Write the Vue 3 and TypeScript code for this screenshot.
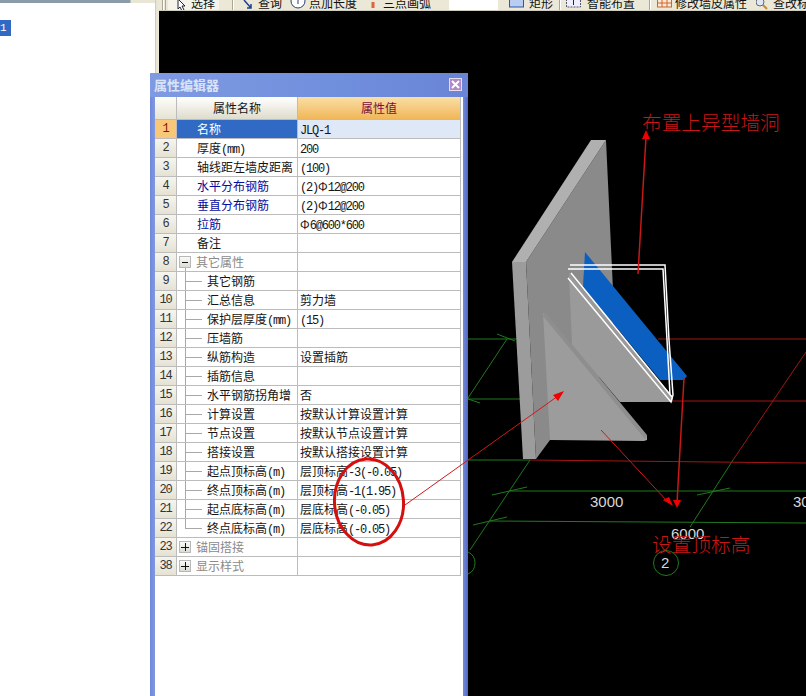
<script setup lang="ts">
type Kind = 'plain' | 'blue' | 'group' | 'branch' | 'last';
interface Row {
  no: number;
  name: string;
  value: string;
  kind: Kind;
  box?: 'open' | 'closed';
}

const rows: Row[] = [
  { no: 1, name: '名称', value: 'JLQ-1', kind: 'plain' },
  { no: 2, name: '厚度(mm)', value: '200', kind: 'plain' },
  { no: 3, name: '轴线距左墙皮距离', value: '(100)', kind: 'plain' },
  { no: 4, name: '水平分布钢筋', value: '(2)Φ12@200', kind: 'blue' },
  { no: 5, name: '垂直分布钢筋', value: '(2)Φ12@200', kind: 'blue' },
  { no: 6, name: '拉筋', value: 'Φ6@600*600', kind: 'blue' },
  { no: 7, name: '备注', value: '', kind: 'plain' },
  { no: 8, name: '其它属性', value: '', kind: 'group', box: 'open' },
  { no: 9, name: '其它钢筋', value: '', kind: 'branch' },
  { no: 10, name: '汇总信息', value: '剪力墙', kind: 'branch' },
  { no: 11, name: '保护层厚度(mm)', value: '(15)', kind: 'branch' },
  { no: 12, name: '压墙筋', value: '', kind: 'branch' },
  { no: 13, name: '纵筋构造', value: '设置插筋', kind: 'branch' },
  { no: 14, name: '插筋信息', value: '', kind: 'branch' },
  { no: 15, name: '水平钢筋拐角增', value: '否', kind: 'branch' },
  { no: 16, name: '计算设置', value: '按默认计算设置计算', kind: 'branch' },
  { no: 17, name: '节点设置', value: '按默认节点设置计算', kind: 'branch' },
  { no: 18, name: '搭接设置', value: '按默认搭接设置计算', kind: 'branch' },
  { no: 19, name: '起点顶标高(m)', value: '层顶标高-3(-0.05)', kind: 'branch' },
  { no: 20, name: '终点顶标高(m)', value: '层顶标高-1(1.95)', kind: 'branch' },
  { no: 21, name: '起点底标高(m)', value: '层底标高(-0.05)', kind: 'branch' },
  { no: 22, name: '终点底标高(m)', value: '层底标高(-0.05)', kind: 'last' },
  { no: 23, name: '锚固搭接', value: '', kind: 'group', box: 'closed' },
  { no: 38, name: '显示样式', value: '', kind: 'group', box: 'closed' },
];

function seg(text: string): { t: string; lat: boolean }[] {
  const parts = text.match(/[\x20-\x7e]+|[^\x20-\x7e]+/g) ?? [];
  return parts.map((t) => ({ t, lat: /^[\x20-\x7e]/.test(t) }));
}
</script>

<template>
  <div class="root">
    <aside class="side">
      <div class="side-top"></div>
      <div class="side-item">1</div>
    </aside>
    <div class="gutter"></div>
    <main class="main">
      <header class="toolbar">
        <span class="sep first"></span>
        <span class="tool pick">
          <svg width="12" height="12" viewBox="0 0 12 12"><path d="M2 0 L9 7 L6 7 L8 11 L6 12 L4 8 L2 10 Z" fill="#fff" stroke="#223" stroke-width="1" /></svg>
          <span class="lbl">选择</span>
        </span>
        <span class="sep s2"></span>
        <span class="tool t3">
          <svg width="12" height="12" viewBox="0 0 12 12"><path d="M2 1 L9 9 M9 5 L9 9 L5 9" fill="none" stroke="#1f3f8f" stroke-width="1.5" /></svg>
          <span class="lbl">查询</span>
        </span>
        <span class="tool t4">
          <svg width="16" height="14" viewBox="0 0 16 14"><circle cx="8" cy="4" r="7" fill="#fff" stroke="#2a3f78" /><path d="M8 1 V7" stroke="#2a3f78" /></svg>
          <span class="lbl">点加长度</span>
        </span>
        <span class="tool t5">
          <svg width="12" height="12" viewBox="0 0 12 12"><path d="M6 3 V9" stroke="#e0623a" stroke-width="3" /></svg>
          <span class="lbl">三点画弧</span>
        </span>
        <span class="input"></span>
        <span class="tool t6">
          <svg width="15" height="12" viewBox="0 0 15 12"><rect x="0.5" y="-3" width="14" height="11" fill="#b9cdf2" stroke="#2e56b0" /></svg>
          <span class="lbl">矩形</span>
        </span>
        <span class="sep s3"></span>
        <span class="tool t7">
          <svg width="15" height="12" viewBox="0 0 15 12"><rect x="0.5" y="-3" width="14" height="11" fill="#eef" stroke="#556" stroke-dasharray="2 1" /><path d="M7.500 1 V6" stroke="#224" /></svg>
          <span class="lbl">智能布置</span>
        </span>
        <span class="sep s4"></span>
        <span class="tool t8">
          <svg width="15" height="12" viewBox="0 0 15 12"><rect x="0.5" y="-3" width="14" height="11" fill="#fbe9d8" stroke="#d2622a" /><path d="M0 4 H15 M5 0 V8 M10 0 V8" stroke="#d2622a" /></svg>
          <span class="lbl">修改墙皮属性</span>
        </span>
        <span class="tool t9">
          <svg width="12" height="12" viewBox="0 0 12 12"><circle cx="4" cy="3" r="4" fill="#dfe6f4" stroke="#667" /><path d="M7 6 L11 10" stroke="#c98a2a" stroke-width="2" /></svg>
          <span class="lbl">查改标高</span>
        </span>
      </header>

      <section class="canvas">
        <svg class="scene" width="647" height="685" viewBox="159 11 647 685">
          <!-- grid -->
          <g fill="none" stroke="#1f7a1f" stroke-width="1">
            <path d="M468 339 H517 M497 334 L515 341 M507 339 L468 398 M468 399 H520 M468 399 L480 403" />
            <path d="M468 460 H530 L470 550 M510 491 H806 M492 495 L527 487 M697 495 L730 488 M490 521 L806 523 M473 525 L507 517 M733 460 L690 527" />
            <path d="M468 552 A12 12 0 0 1 475 563 A12 12 0 0 1 468 574" />
            <circle cx="666" cy="563" r="12.500" />
          </g>
          <g fill="none" stroke="#a31515" stroke-width="1">
            <path d="M658 339 H806 M672 401 H806 M530 460 L806 463 M806 352 L733 460" />
          </g>
          <!-- wall -->
          <polygon points="526,262 606,140 613,290 613,360 550,440 536,459" fill="#8a8a8a" />
          <polygon points="512,262 591,140 606,140 526,262" fill="#b0b0b0" />
          <polygon points="512,262 526,262 536,459 523,459" fill="#9c9c9c" />
          <polygon points="569,273 673,397 672,402 620,402 572,345" fill="#9a9a9a" />
          <polygon points="585,252 687,376 684,380 660,380 583,287" fill="#0a5fc0" />
          <polygon points="543,313 647,436 647,440 644,441 550,440" fill="#9c9c9c" />
          <polygon points="543,316 545,312 647,435 645,439" fill="#8e8e8e" />
          <!-- outline -->
          <g fill="none" stroke="#fff" stroke-width="1.500">
            <path d="M570 265 H665 L669 340 L673 395 L671 402 L568 278" />
            <path d="M568 269 H663 L667 340 L670 395 M571 273 L672 397" />
          </g>
          <text class="dim" x="590" y="507">3000</text>
          <text class="dim" x="793" y="507">30</text>
          <text class="dim" x="671" y="539">6000</text>
          <text class="dim" x="661" y="568">2</text>
        </svg>
      </section>
    </main>

    <section class="dialog">
      <div class="title">
        <span class="title-text">属性编辑器</span>
        <span class="close">
          <svg width="9" height="9" viewBox="0 0 9 9"><path d="M1 1 L8 8 M8 1 L1 8" stroke="#fff" stroke-width="2" /></svg>
        </span>
      </div>
      <div class="grid">
        <div class="row head">
          <div class="no"></div>
          <div class="name">属性名称</div>
          <div class="val">属性值</div>
        </div>
        <div v-for="(r, i) in rows" :key="r.no" class="row" :class="{ sel: i === 0 }">
          <div class="no lat">{{ r.no }}</div>
          <div class="name" :class="[r.kind, r.box]">
            <span v-if="r.box" class="box" :class="r.box"></span>
            <span v-if="r.kind === 'branch' || r.kind === 'last'" class="branch" :class="r.kind"></span>
            <span class="txt">
              <span v-for="(s, k) in seg(r.name)" :key="k" :class="{ lat: s.lat }">{{ s.t }}</span>
            </span>
          </div>
          <div class="val">
            <span v-for="(s, k) in seg(r.value)" :key="k" :class="{ lat: s.lat }">{{ s.t }}</span>
          </div>
        </div>
      </div>
    </section>

    <svg class="notes" width="806" height="696" viewBox="0 0 806 696">
      <ellipse cx="369" cy="502" rx="34.500" ry="43" transform="rotate(-4 369 502)" fill="none" stroke="#d50f0f" stroke-width="3" />
      <g fill="none" stroke="#d01818" stroke-width="1">
        <path d="M405 505 L558 396" />
        <path d="M601 430 L667 501" />
      </g>
      <path d="M638 274 L646 137 M684 378 L677 503" fill="none" stroke="#c81818" stroke-width="1.500" />
      <g fill="#f00000">
        <polygon points="646,130 642,139 650,139" />
        <polygon points="564,391 553,395 558,401" />
        <polygon points="673,506 663,500 669,497" />
        <polygon points="677,508 673,500 681,500" />
      </g>
      <text class="red" x="642" y="130">布置上异型墙洞</text>
      <text class="red" x="652" y="552">设置顶标高</text>
    </svg>
  </div>
</template>

<style>
html, body { margin: 0; background: #000; }
</style>

<style scoped>
.root {
  position: relative;
  width: 806px;
  height: 696px;
  overflow: hidden;
  display: flex;
  font-family: "Noto Sans CJK SC", "Liberation Sans", sans-serif;
  font-size: 12px;
  color: #151515;
}
.side {
  width: 155px;
  height: 696px;
  background: #fff;
  flex: none;
}
.side-top {
  height: 3px;
  margin-bottom: 17px;
  background: linear-gradient(90deg, #8b9ca8 0, #8b9ca8 130px, #e9e6d6 131px);
}
.side-item {
  width: 11px;
  height: 16px;
  background: #316ac5;
  color: #fff;
  font: 11px/16px "Liberation Mono", monospace;
}
.gutter {
  width: 4px;
  flex: none;
  background: linear-gradient(90deg, #b9b7aa 0, #e6e3d3 1px, #ece9d8 100%);
}
.main {
  flex: 1;
  display: flex;
  flex-direction: column;
  min-width: 0;
}
.toolbar {
  height: 11px;
  flex: none;
  box-sizing: border-box;
  background: #ebe8d8;
  border-bottom: 1px solid #cfccbc;
  display: flex;
  align-items: flex-end;
  overflow: hidden;
  white-space: nowrap;
}
.tool {
  display: flex;
  align-items: flex-end;
  flex: none;
  height: 10px;
}
.tool svg { flex: none; margin-bottom: -1px; }
.lbl { line-height: 14px; height: 14px; color: #111; }
.sep {
  width: 1px;
  height: 10px;
  flex: none;
  background: #a9a696;
  box-shadow: 1px 0 #fff;
}
.sep.first { margin-left: 3px; box-shadow: 1px 0 #fff, 3px 0 #a9a696; }
.pick {
  margin-left: 5px;
  width: 51px;
  padding-left: 8px;
  box-sizing: border-box;
  background: #f6f4ea;
  gap: 3px;
}
.s2 { margin-left: 13px; }
.t3 { margin-left: 9px; gap: 4px; }
.t4 { margin-left: 8px; gap: 3px; }
.t5 { margin-left: 10px; gap: 4px; }
.input { width: 49px; height: 10px; margin-left: 18px; background: #fff; flex: none; }
.t6 { margin-left: 11px; gap: 5px; }
.s3 { margin-left: 6px; }
.t7 { margin-left: 6px; gap: 6px; }
.s4 { margin-left: 14px; }
.t8 { margin-left: 7px; gap: 3px; }
.t9 { margin-left: 9px; gap: 5px; }
.canvas { flex: 1; background: #000; min-height: 0; }
.scene { display: block; }
.dim { fill: #d8d8d8; font: 15px "Liberation Sans", sans-serif; }
.notes { position: absolute; left: 0; top: 0; pointer-events: none; }
.red { fill: #c81616; font-size: 19.700px; font-weight: 300; font-family: "Noto Sans CJK SC", sans-serif; }

.dialog {
  position: absolute;
  left: 150px;
  top: 73px;
  width: 318px;
  height: 623px;
  box-sizing: border-box;
  background: linear-gradient(90deg, #6f88d8 0, #8198e2 5px, #8198e2 310px, #6d84d6 314px, #5468c4 318px);
  display: flex;
  flex-direction: column;
}
.title {
  height: 24px;
  flex: none;
  box-sizing: border-box;
  padding: 0 6px 2px 4px;
  display: flex;
  align-items: center;
  justify-content: space-between;
  background: linear-gradient(90deg, #7f9ae2 0, #6f8edc 60%, #6a84d6 100%);
}
.title-text { color: #d9e4f8; font-size: 13px; font-weight: 700; }
.close {
  width: 13px;
  height: 13px;
  box-sizing: border-box;
  display: flex;
  align-items: center;
  justify-content: center;
  background: #b18ac8;
  border: 1px solid #e6dcf0;
}
.grid {
  margin-left: 5px;
  margin-right: 5px;
  flex: 1;
  background: #fff;
  padding-right: 2px;
  box-sizing: border-box;
}
.row {
  display: flex;
  height: 19px;
  box-sizing: border-box;
  border-bottom: 1px solid #bcbcbc;
  line-height: 18px;
}
.row.head { height: 23px; line-height: 22px; }
.no {
  width: 22px;
  flex: none;
  box-sizing: border-box;
  border-right: 1px solid #bcbcbc;
  background: linear-gradient(#f6f5ee, #e5e2d4);
  text-align: center;
  color: #333;
}
.name {
  width: 121px;
  flex: none;
  box-sizing: border-box;
  border-right: 1px solid #bcbcbc;
  display: flex;
  align-items: stretch;
  padding-left: 20px;
  white-space: nowrap;
  overflow: hidden;
}
.val {
  flex: 1;
  box-sizing: border-box;
  border-right: 1px solid #bcbcbc;
  padding-left: 2px;
  white-space: nowrap;
  overflow: hidden;
}
.head .no { background: linear-gradient(#fdfdf9, #e6e3d4); }
.head .name {
  display: block;
  padding: 0;
  text-align: center;
  font-size: 12px;
  background: linear-gradient(#ffffff, #dfdccb);
}
.head .val {
  padding: 0;
  text-align: center;
  color: #7a0f40;
  background: linear-gradient(#fadfa6, #f1b658);
}
.sel .no { background: #f8c878; color: #8a1010; }
.sel .name { background: #316ac5; color: #fff; }
.sel .val { background: #dfe8f6; }
.blue { color: #0a0a9c; }
.group { color: #8a8a8a; padding-left: 2px; }
.group.open {
  background: linear-gradient(#a8a8a8, #a8a8a8) 8px 15px / 1px 4px no-repeat;
}
.box {
  width: 12px;
  height: 12px;
  margin: 3px 5px 0 0;
  flex: none;
  box-sizing: border-box;
  border: 1px solid #b8b8b8;
}
.box.open {
  background:
    linear-gradient(#111, #111) center / 6px 1px no-repeat,
    linear-gradient(#fafafa, #dcdcd4);
}
.box.closed {
  background:
    linear-gradient(#111, #111) center / 8px 1px no-repeat,
    linear-gradient(#111, #111) center / 1px 8px no-repeat,
    linear-gradient(#fafafa, #dcdcd4);
}
.name.branch, .name.last { padding-left: 8px; }
span.branch {
  width: 17px;
  height: 19px;
  margin-right: 5px;
  flex: none;
  background:
    linear-gradient(#a8a8a8, #a8a8a8) 0 0 / 1px 19px no-repeat,
    linear-gradient(#a8a8a8, #a8a8a8) 1px 9px / 16px 1px no-repeat;
}
span.branch.last {
  background:
    linear-gradient(#a8a8a8, #a8a8a8) 0 0 / 1px 10px no-repeat,
    linear-gradient(#a8a8a8, #a8a8a8) 1px 9px / 16px 1px no-repeat;
}
.lat {
  font-family: "Liberation Mono", monospace;
  font-size: 12px;
  letter-spacing: -1.200px;
}
</style>
